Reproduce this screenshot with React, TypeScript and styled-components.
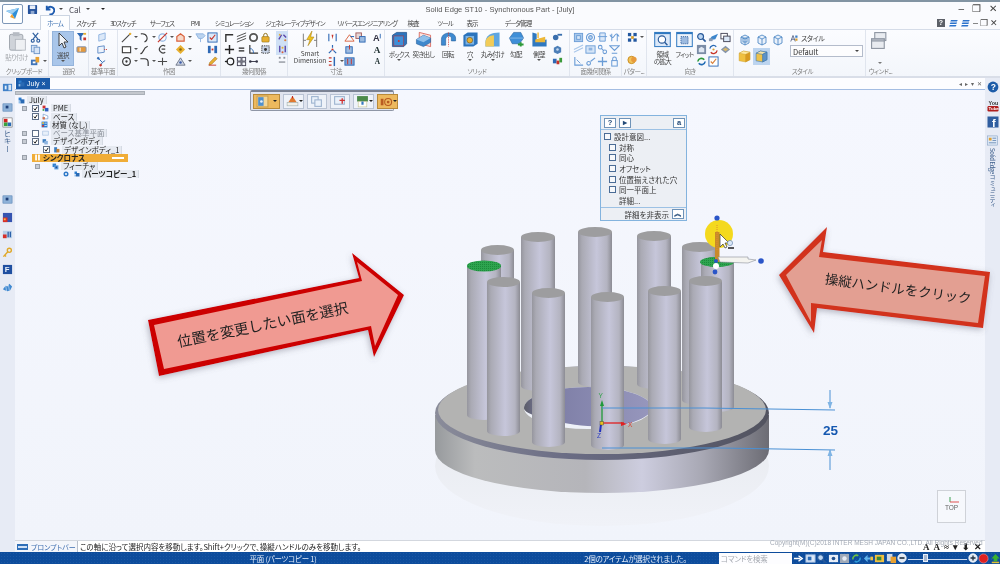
import React from "react";
import styled, { createGlobalStyle } from "styled-components";

const jp = `"Noto Sans CJK JP", "Liberation Sans", sans-serif`;

const GlobalStyle = createGlobalStyle`
  html, body { margin: 0; padding: 0; background: #fff; }
  * { box-sizing: border-box; }
`;

// ---------------------------------------------
// Small ribbon glyphs, all drawn on a 12 unit grid
// ---------------------------------------------
const B = "#2d68b4";
const D = "#3a3f4a";
const L = "#8fb4e0";
const R = "#c8352a";
const Y = "#e8b030";

const glyphs: Record<string, React.ReactNode> = {
  cut: (<g fill="none" stroke="#2f5f9f" strokeWidth="1.3"><path d="M3.5 7.5L9 1M8.5 7.5L3 1" /><circle cx="3" cy="9.5" r="1.6" /><circle cx="9" cy="9.5" r="1.6" /></g>),
  copy: (<g fill="#d6e4f6" stroke="#6f96c8"><rect x="1.5" y="1.5" width="6" height="7" /><rect x="4.5" y="3.5" width="6" height="7" /></g>),
  brush: (<g><rect x="1" y="4" width="7" height="6" fill="#3f74b8" /><rect x="6" y="1" width="4" height="6" fill="#e8a030" /><rect x="3" y="6" width="3" height="2" fill="#fff" /></g>),
  filter: (<g><path d="M1 1h8L6 5v5L4 8V5z" fill={B} /><rect x="8" y="6" width="3" height="3" fill={R} /><rect x="8" y="1" width="3" height="2" fill={Y} /></g>),
  ticket: (<g><rect x="1" y="3" width="10" height="6" rx="1" fill="#e59a3c" stroke="#7f93b5" /><rect x="4" y="4" width="1" height="4" fill="#fff" /></g>),
  planeA: (<path d="M3 3l7-2v7l-7 2z" fill="#dbe8f8" stroke={L} />),
  planeB: (<g><path d="M2 3l7-1v7l-7 1z" fill="#edf3fb" stroke="#5f8bc6" /><path d="M9 6h3" stroke={R} strokeDasharray="1 1" /></g>),
  planeC: (<g fill="none" stroke={B}><path d="M2 2l5 5 3-2M7 7l-2 3" /><circle cx="2.5" cy="2.5" r="1" fill={B} /><circle cx="5" cy="10" r="1" fill={R} stroke={R} /></g>),
  line: (<g><path d="M1 11L10 2" stroke="#4a4a4a" strokeWidth="1.2" /><circle cx="10" cy="2" r="1.3" fill={Y} /></g>),
  arc: (<path d="M2 2c7-1 9 6 4 9" fill="none" stroke="#3a3a3a" strokeWidth="1.2" />),
  trim: (<g fill="none" strokeWidth="1.2"><circle cx="6" cy="6" r="4" stroke={L} /><path d="M1 11L11 1" stroke={R} /></g>),
  poly: (<path d="M2 10V5l4-3 4 3v5z" fill="#f6d8c8" stroke="#d9603c" strokeWidth="1.3" />),
  rect: (<rect x="1.5" y="3" width="9" height="6.5" fill="#fff" stroke="#3a3a3a" strokeWidth="1.2" />),
  curve: (<path d="M1.5 10.5c4 0 2-6 8-8" fill="none" stroke="#3a3a3a" strokeWidth="1.3" />),
  cee: (<path d="M9 2.5a4 4 0 1 0 0 6.5M9 5.5H5" fill="none" stroke="#444" strokeWidth="1.3" />),
  diamond: (<g><path d="M6 1l5 5-5 5-5-5z" fill={Y} /><circle cx="6" cy="6" r="1.4" fill="#8a6a10" /></g>),
  circle: (<g fill="none" stroke="#333" strokeWidth="1.3"><circle cx="6" cy="6" r="4.2" /><circle cx="6" cy="6" r=".6" /></g>),
  fillet: (<path d="M1.5 3H6c3 0 4 2 4 4v4" fill="none" stroke="#333" strokeWidth="1.3" />),
  cross: (<path d="M1 6h10M6 2v8" fill="none" stroke="#4a4a4a" strokeWidth="1.2" />),
  tri: (<g><path d="M6 2l5 8H1z" fill="#cfd6e4" stroke="#6a7488" /><circle cx="6" cy="7" r="1.4" fill="#3d5da8" /></g>),
  wing: (<g><path d="M1 2h8l2 2-3 3H4z" fill="#bcd4ef" stroke={L} /><path d="M6 7v4" stroke={L} /></g>),
  check: (<g><rect x="1" y="1" width="10" height="10" fill="#dbe8f8" stroke={B} /><path d="M3 6l2 2 4-5" fill="none" stroke="#c8352a" strokeWidth="1.2" /></g>),
  split: (<g fill={B}><rect x="1" y="2" width="3" height="8" /><rect x="8" y="2" width="3" height="8" /><rect x="5" y="5" width="2" height="2" fill={R} /></g>),
  pencil: (<g><path d="M2 10l1-3 6-6 2 2-6 6z" fill={Y} stroke="#a06a10" strokeWidth=".6" /><path d="M2 10h8" stroke={R} /></g>),
  corner: (<path d="M2 11V3h8" fill="none" stroke="#333" strokeWidth="1.5" />),
  para: (<path d="M1 8l10-4M1 5l10-4M1 11l10-4" fill="none" stroke="#444" strokeWidth="1" />),
  ring: (<circle cx="6" cy="6" r="4" fill="none" stroke="#555" strokeWidth="2" />),
  lock: (<g><rect x="2" y="5" width="8" height="6" rx="1" fill={Y} stroke="#8a6a10" strokeWidth=".6" /><path d="M4 5V3.5a2 2 0 0 1 4 0V5" fill="none" stroke="#8a6a10" /></g>),
  plus: (<path d="M1 6h10M6 1v10" stroke="#222" strokeWidth="1.6" />),
  equal: (<path d="M3 4.5h6M3 7.5h6" stroke="#222" strokeWidth="1.5" />),
  angle: (<g fill="none"><path d="M2 1v9h9" stroke="#333" strokeWidth="1.3" /><path d="M2 5c3 0 4 2 4 5" stroke={B} /></g>),
  dotSq: (<g><rect x="2" y="2" width="8" height="8" fill="#c9d4e6" stroke="#333" strokeDasharray="1.4 1" /><circle cx="6" cy="6" r="1.6" fill="#333" /></g>),
  tangent: (<g fill="none" stroke="#222" strokeWidth="1.4"><circle cx="7" cy="6" r="3.6" /><path d="M1 6h3" /></g>),
  knot: (<g fill="none" stroke="#445" strokeWidth="1"><rect x="1.5" y="1.5" width="4" height="4" /><rect x="6.5" y="6.5" width="4" height="4" /><rect x="1.5" y="6.5" width="4" height="4" /><rect x="6.5" y="1.5" width="4" height="4" /></g>),
  dots: (<g fill="#334"><circle cx="2.5" cy="6" r="1.4" /><circle cx="9.5" cy="6" r="1.4" /><path d="M3 5.5h6v1H3z" /></g>),
  relA: (<g><path d="M2 8l3-5M7 3l3 3" stroke="#5a45a8" strokeWidth="1.5" /><circle cx="3" cy="3" r="1" fill={Y} /><circle cx="9" cy="9" r="1.2" fill="#d9803a" /></g>),
  relB: (<g><path d="M3 2v7M9 2v7" stroke="#5a45a8" strokeWidth="1.5" /><circle cx="6" cy="4" r="1.1" fill={Y} /><circle cx="6" cy="9" r="1.1" fill="#d9603a" /></g>),
  relC: (<g fill="#8a8f98"><rect x="2" y="2" width="2" height="2" /><rect x="7" y="2" width="2" height="2" /><rect x="2" y="7" width="7" height="1.4" /></g>),
  dimA: (<g><path d="M2 2v8M10 2v8" stroke={B} strokeWidth="1.2" /><path d="M5 3l2 0-1 5z" fill={R} /></g>),
  dimB: (<g><path d="M6 1v3M2 10l3-3M10 10L7 7" stroke={B} strokeWidth="1.3" /><circle cx="6" cy="6" r="1.2" fill={R} /></g>),
  dimC: (<g><path d="M2 2h3M2 6h3M2 10h3" stroke={R} strokeWidth="1.3" /><path d="M8 1v10" stroke={B} strokeWidth="1.6" /></g>),
  dimD: (<g fill="none"><path d="M1 10L6 3l5 7z" stroke="#d9603c" /><path d="M7 5h4" stroke={B} strokeWidth="1.2" /></g>),
  dimE: (<g><rect x="2" y="3" width="7" height="7" fill="#9dbbe0" stroke={B} /><path d="M6 1v5" stroke={R} /></g>),
  dimF: (<g><rect x="1" y="2" width="10" height="8" fill="#7ea5d8" stroke={B} /><path d="M4 3v6M8 3v6" stroke={R} /></g>),
  dimG: (<g><rect x="1" y="1" width="6" height="6" fill="#e6d6d6" stroke="#a05a5a" /><rect x="5" y="5" width="6" height="6" fill="#9dbbe0" stroke={B} /></g>),
  txtA: (<g><text x="1" y="10" fontSize="10" fontWeight="700" fontFamily="Liberation Sans" fill="#334">A</text><path d="M9 2v5" stroke={B} /></g>),
  txtB: (<text x="2" y="10" fontSize="10" fontWeight="700" fontFamily="Liberation Serif" fill="#233">A</text>),
  txtC: (<text x="3" y="9" fontSize="8" fontWeight="700" fontFamily="Liberation Serif" fill="#233">A</text>),
  bolt: (<g><path d="M1 2v10M11 2v10M1 7h2M9 7h2" stroke="#777" strokeWidth=".7" /><path d="M7.5 0L3.5 6.5h2.5L4.5 11 9 4.5H6.5z" fill="#eec21f" stroke="#a87f10" strokeWidth=".4" /></g>),
  box: (<g><path d="M1 3l3-2h7v8l-2 2H1z" fill="#2c74bd" stroke="#164a84" strokeWidth=".5" /><rect x="2" y="3.5" width="7" height="7" fill="#3e8fd8" stroke="#c03030" strokeWidth=".4" /><circle cx="5.5" cy="7" r=".7" fill="#d03030" /></g>),
  extrude: (<g><path d="M3 1l8 2v8l-8-2z" fill="#fbe3de" stroke="#d0453a" strokeWidth=".5" /><path d="M1 6l5-3 5 2v3l-5 3-5-2z" fill="#3f88cc" stroke="#1f5a98" strokeWidth=".4" /><path d="M1 6l5 2 5-3-5-2z" fill="#8fc0ea" /></g>),
  revolve: (<g><path d="M1 10V6c0-6 10-6 10-1v2H8V5c0-2-4-2-4 1v4z" fill="#3e8ad0" stroke="#1f5a98" strokeWidth=".4" /><path d="M6 1v10" stroke="#d03a30" strokeWidth=".5" strokeDasharray="1 .6" /></g>),
  hole: (<g><path d="M1 3l3-2h7v8l-3 2H1z" fill="#2c74bd" /><path d="M2.5 3.5h6v6h-6z" fill="#7db4e4" /><circle cx="5.5" cy="6.5" r="2" fill={Y} stroke="#6a4a10" strokeWidth=".4" /></g>),
  round: (<g><path d="M1 11V8c0-5 4-7 10-7v10z" fill="#5fa6e0" /><path d="M1 8c0-3 3-5 6-5v8H1z" fill="#f2cc58" /></g>),
  draft: (<g><path d="M1 5l3-4h5l2 4-3 4H3z" fill="#3f8fd8" stroke="#1f5a98" strokeWidth=".4" /><path d="M1 5h10" stroke="#9cc6ee" strokeWidth=".5" /><path d="M7 9.5h4M9 8v3" stroke="#2f9a3a" strokeWidth="1.3" /></g>),
  wall: (<g><path d="M1 1l3 1v5l7-1v5H1z" fill="#2f78c0" /><path d="M3 6l7-2v4H3z" fill="#eeb838" /><path d="M5 1v4" stroke="#eeb838" /></g>),
  sm1: (<g fill="#3a6fae"><circle cx="4" cy="6" r="3" /><rect x="6" y="2" width="5" height="2" /></g>),
  sm2: (<g><path d="M2 4l4-2 4 2v5l-4 2-4-2z" fill="#4d7fb8" /><circle cx="6" cy="6" r="1.4" fill="#c5d8ee" /></g>),
  sm3: (<g><rect x="1" y="3" width="4" height="5" fill={B} /><rect x="5" y="5" width="3" height="4" fill="#c8352a" /><rect x="8" y="2" width="3" height="5" fill="#3b9a3a" /></g>),
  face1: (<g><rect x="1.5" y="1.5" width="9" height="9" fill="#a8c8ec" stroke="#6a9cd6" /><rect x="4" y="4" width="4" height="4" fill="#d5e5f7" stroke="#6a9cd6" /></g>),
  face2: (<g fill="none" stroke="#6a9cd6" strokeWidth="1.2"><circle cx="6" cy="6" r="4.4" /><circle cx="6" cy="6" r="2" fill="#bcd6f2" /></g>),
  face3: (<g fill="none" stroke="#6a9cd6"><path d="M3 1h6v9H3z" fill="#dbe8f8" /><path d="M1 5h10" /></g>),
  face4: (<path d="M1 3c2 4 3 4 5 1s3-2 5 1M3 2v8M9 2v8" fill="none" stroke="#6a9cd6" strokeWidth="1.1" />),
  face5: (<path d="M1 9l10-5M1 6l10-5" fill="none" stroke="#a9c7ea" strokeWidth="1.2" />),
  face6: (<g><rect x="1" y="2" width="10" height="8" fill="#d5e5f7" stroke="#6a9cd6" /><rect x="4" y="4" width="4" height="3" fill="#8fb4e0" /></g>),
  face7: (<g fill="none" stroke="#6a9cd6" strokeWidth="1.1"><circle cx="3.5" cy="3.5" r="2" /><circle cx="8.5" cy="8.5" r="2" /><path d="M5 5l2 2" /></g>),
  face8: (<path d="M1 2h10L6 7zM3 10h6" fill="none" stroke="#6a9cd6" strokeWidth="1.1" />),
  face9: (<g fill="none" stroke="#6a9cd6"><path d="M2 1v9h9" strokeWidth="1.2" /><path d="M4 4l4 4" /></g>),
  face10: (<g fill="none" stroke="#6a9cd6" strokeWidth="1.2"><circle cx="4" cy="8" r="2" /><path d="M6 6l5-4" /></g>),
  face11: (<path d="M1 6h10M6 1v10" stroke="#6a9cd6" strokeWidth="1.4" />),
  face12: (<g fill="none" stroke="#6a9cd6" strokeWidth="1.1"><rect x="3" y="5" width="6" height="6" /><path d="M4 5V3a2 2 0 0 1 4 0v2" /></g>),
  stripe: (<path d="M2.5 2.5h8l-1 1.6h-8zM1.8 5.5h8l-1 1.6h-8zM1 8.5h8l-1 1.6H0z" fill="#2a72cc" />),
  grid: (<g fill="#22579f"><rect x="1" y="1" width="3.6" height="3.6" /><rect x="7" y="1" width="3.6" height="3.6" /><rect x="1" y="7" width="3.6" height="3.6" /><rect x="7" y="7" width="3.6" height="3.6" /><rect x="4.5" y="4.5" width="3" height="3" fill="#d9a030" /></g>),
  swirl: (<g><circle cx="5" cy="6.5" r="4" fill="#f0c35a" stroke="#c88a1a" /><circle cx="7.5" cy="6" r="3" fill="#e79a3c" /></g>),
  zoomArea: (<g><rect x=".5" y="1" width="11" height="10" fill="#dbe8f8" stroke="#2f78c0" strokeWidth=".7" /><rect x=".5" y="1" width="11" height="1.2" fill="#2f78c0" /><circle cx="5.6" cy="6" r="2.6" fill="#fff" stroke="#2a5a9a" strokeWidth=".8" /><path d="M7.5 8l2 2" stroke="#2a5a9a" strokeWidth="1" /></g>),
  fit: (<g><rect x=".5" y="1" width="11" height="10" fill="#eef4fb" stroke="#2f78c0" strokeWidth=".7" /><rect x=".5" y="1" width="11" height="1.2" fill="#2f78c0" /><rect x="3.5" y="4" width="5" height="5" fill="#9dbbe0" stroke="#2a5a9a" strokeWidth=".6" strokeDasharray=".8 .6" /></g>),
  mag: (<g fill="none" stroke="#2a5a9a" strokeWidth="1.3"><circle cx="5" cy="5" r="3.2" fill="#bcd6f2" /><path d="M7.5 7.5l3 3" strokeWidth="1.8" /></g>),
  pan: (<g><path d="M1 9l3-4 7-3-3 6z" fill="#3c86cc" /><rect x="1" y="7" width="4" height="3" fill="#8a9ab0" /></g>),
  win2: (<g fill="#fff" stroke="#445"><rect x="1" y="1.5" width="7" height="6" /><rect x="4" y="4.5" width="7" height="6" fill="#dbe8f8" /></g>),
  cam: (<g><rect x="1" y="1" width="10" height="10" fill="#7b8ca6" /><path d="M3 9V5l3-2 3 2v4z" fill="#dfe7f2" /></g>),
  spin: (<g fill="none" strokeWidth="1.3"><path d="M2 5a4 4 0 0 1 7-2" stroke="#2a6ab4" /><path d="M10 7a4 4 0 0 1-7 2" stroke="#c8352a" /><circle cx="6" cy="6" r="1.2" fill="#d9a030" stroke="none" /></g>),
  gem: (<g><path d="M1 6l5-4 5 4-5 4z" fill="#8594a8" /><path d="M3 6l3-2 3 2-3 2z" fill="#d9b86a" /></g>),
  loop: (<g fill="none" strokeWidth="1.8"><path d="M2 6a4 4 0 0 1 7-2" stroke="#2e9a3c" /><path d="M10 6a4 4 0 0 1-7 2" stroke="#1f6ab4" /></g>),
  flag: (<g><rect x="1" y="1" width="10" height="10" fill="#fff" stroke={B} /><path d="M3 6l2 2 4-5" fill="none" stroke="#d9803a" strokeWidth="1.3" /></g>),
  cubeA: (<g fill="#eaf1fa" stroke="#3f7fc0" strokeWidth=".8"><path d="M2 3l4-2 4 2v6l-4 2-4-2z" /><path d="M2 3l4 2 4-2M6 5v6" fill="none" /><rect x="4" y="4" width="4" height="4" fill="none" /></g>),
  cubeB: (<g fill="#eaf1fa" stroke="#3f7fc0" strokeWidth=".8"><path d="M2 3l4-2 4 2v6l-4 2-4-2z" /><path d="M2 3l4 2 4-2M6 5v6" fill="none" /></g>),
  cubeY: (<g stroke="#caa030" strokeWidth=".4"><path d="M1 3l4-2 6 1v7l-4 2-6-1z" fill="#f0c040" /><path d="M7 4l4-2v7l-4 2z" fill="#d99a20" /><path d="M1 3l6 1 4-2-6-1z" fill="#ffe9a0" /></g>),
  cubeS: (<g stroke="#2f6fb0" strokeWidth=".5"><path d="M1 3l4-2 6 1v7l-4 2-6-1z" fill="#edc24a" /><path d="M1 3l6 1 4-2-6-1z" fill="#f6e3a8" /><path d="M7 4l4-2v7l-4 2z" fill="#5d93c8" /></g>),
  layers: (<g fill="#e8ebf0" stroke="#8e96a2" strokeWidth=".7"><rect x="3" y="1" width="7" height="5" /><rect x="1" y="5" width="8" height="6" /><rect x="1" y="5" width="8" height="1.3" fill="#c2c8d2" /></g>),
  paste: (<g><rect x="1.5" y="2" width="8" height="9.5" rx="1" fill="#cfd3d9" stroke="#a2a8b0" strokeWidth=".6" /><rect x="3.5" y=".7" width="4" height="2.4" fill="#b6bbc3" /><rect x="5" y="5" width="6" height="6.5" fill="#eef0f3" stroke="#b0b5bd" strokeWidth=".5" /></g>),
  styleIcon: (<g><path d="M1 10L4 2l3 8M2.5 7h3" stroke="#3a4a70" fill="none" strokeWidth="1" /><rect x="7" y="2" width="3" height="3" fill="#3d7fc4" /><rect x="7" y="6" width="3" height="3" fill="#d9a030" /></g>),
  arrowRight: (<path d="M1 6h7M6 3l4 3-4 3" fill="none" stroke="#fff" strokeWidth="1.6" />),
  stPage: (<g><rect x="1" y="2" width="10" height="8" fill="#dbe8f8" stroke="#9db8dc" /><path d="M3 4h4v4H3z" fill="#2b6cb8" /></g>),
  stDia: (<g><rect x="1" y="2" width="10" height="8" fill="#e8eef7" /><circle cx="6" cy="6" r="2" fill="#20508f" /></g>),
  stGear: (<g><rect x="1" y="1" width="10" height="10" fill="#a0aab8" /><circle cx="6" cy="6" r="2.4" fill="#e6ecf4" /></g>),
  stLoop: (<g fill="none" strokeWidth="1.8"><path d="M2 7a4 4 0 0 1 6-4" stroke="#6dc040" /><path d="M10 5a4 4 0 0 1-6 4" stroke="#2f9ad8" /></g>),
  stMove: (<g fill="#5fb2ea"><path d="M1 6l4-4v3h3v2H5v3z" /><rect x="8" y="4" width="3" height="4" fill="#f0c040" /></g>),
  stGreen: (<g><rect x="1" y="2" width="10" height="8" fill="#f0c040" /><rect x="3" y="4" width="5" height="4" fill="#3a8a3a" /></g>),
  stDoc: (<g><rect x="1" y="1" width="6" height="8" fill="#cfd9e6" /><rect x="5" y="4" width="6" height="7" fill="#e8a030" /></g>),
  zoomOut: (<g><circle cx="6" cy="6" r="5" fill="#dfe7f2" stroke="#fff" /><rect x="3" y="5" width="6" height="2" fill="#234" /></g>),
  zoomIn: (<g><circle cx="6" cy="6" r="5" fill="#dfe7f2" stroke="#fff" /><path d="M3 6h6M6 3v6" stroke="#234" strokeWidth="1.6" /></g>),
  stop: (<g><circle cx="6" cy="6" r="5" fill="#e02020" stroke="#f5a0a0" strokeWidth=".6" /></g>),
  go: (<g><path d="M6 1l4.5 5H8v3H4V6H1.5z" fill="#38b030" /><rect x="2" y="9.5" width="8" height="1.6" fill="#e0c030" /></g>),
  tool1: (<g><rect x="1" y="1" width="10" height="10" fill="#f3d79a" stroke="#caa050" /><rect x="2" y="2" width="5" height="8" fill="#4f90d0" /><circle cx="5" cy="6" r="1.2" fill="#e8f0fa" /></g>),
  tool2: (<g><path d="M6 1l4 6H2z" fill="#e07a30" /><rect x="1" y="7" width="10" height="3" fill="#f2f0e8" stroke="#9aa" strokeWidth=".5" /><path d="M6 1v2" stroke="#c02020" /></g>),
  tool3: (<g fill="#eaf1fa" stroke="#9db3cf"><rect x="1.5" y="1.5" width="6" height="6" /><rect x="4.5" y="4.5" width="6" height="6" /></g>),
  tool4: (<g><rect x="1.5" y="1.5" width="9" height="7" fill="#eaf1fa" stroke="#9db3cf" /><path d="M6 5h5M8.5 3v5" stroke="#d03030" strokeWidth="1.2" /></g>),
  tool5: (<g><rect x="1" y="1" width="10" height="5" fill="#4b8a4a" /><rect x="2" y="6" width="8" height="5" fill="#fdfdf8" stroke="#bb8" strokeWidth=".5" /><rect x="5" y="6" width="2" height="3" fill="#3478c0" /></g>),
  tool6: (<g fill="none" stroke="#b85a20"><rect x="1.2" y="4" width="1.5" height="5" fill="#b85a20" /><circle cx="7.5" cy="6.5" r="3.2" strokeWidth="1" /><circle cx="7.5" cy="6.5" r=".8" fill="#b85a20" /></g>),
  railLib: (<g><rect x="1" y="2" width="10" height="8" fill="#3f80c8" /><rect x="3" y="4" width="2" height="4" fill="#e2eefa" /><rect x="7" y="3" width="3" height="6" fill="#d6e6f7" /></g>),
  railScreen: (<g><rect x="1" y="2" width="10" height="8" fill="#8fb2d8" stroke="#3a6ea8" strokeWidth=".5" /><rect x="4" y="4" width="3" height="3" fill="#1e3f78" /></g>),
  railRed: (<g><rect x="1" y="1" width="10" height="10" fill="#fff" stroke="#444" strokeWidth=".5" /><rect x="2" y="2" width="4" height="4" fill="#d02020" /><rect x="6" y="6" width="4" height="4" fill="#2a6ab4" /><rect x="2" y="6" width="4" height="4" fill="#38a040" /></g>),
  railHeat: (<g><rect x="1" y="1" width="10" height="10" fill="#3553b0" /><rect x="1" y="6" width="5" height="5" fill="#d8302a" /><rect x="2" y="7" width="2" height="2" fill="#f0c040" /></g>),
  railHeat2: (<g><rect x="1" y="2" width="10" height="8" fill="#b8cfe8" /><rect x="1" y="6" width="4" height="4" fill="#d8302a" /><rect x="6" y="3" width="1.4" height="6" fill="#2a5fa8" /><rect x="8.4" y="3" width="1.4" height="6" fill="#2a5fa8" /></g>),
  railKey: (<g fill="none" stroke="#e0a828" strokeWidth="1.5"><circle cx="8" cy="3.6" r="2.2" /><path d="M6.4 5.2L1.5 10.5M3 9l1.4 1.4" /></g>),
  railF: (<g><rect x="1" y="1" width="10" height="10" fill="#1f4fa0" /><text x="3" y="9.2" fontSize="8.5" fontWeight="700" fontFamily="Liberation Sans" fill="#e8f0fa">F</text></g>),
  railWave: (<g fill="#3f88d0"><path d="M1 8l3-4 2 1 2-3 3 3-2 4-3 1-3-1z" /><path d="M4 4l1 6M7 3l1 6" stroke="#cfe2f6" strokeWidth=".7" /></g>),
  help: (<g><circle cx="6" cy="6" r="5.4" fill="#1d5ca8" /><text x="3.7" y="9.2" fontSize="8.5" fontWeight="700" fontFamily="Liberation Sans" fill="#fff">?</text></g>),
  youtube: (<g><text x="1.5" y="5.2" fontSize="5.4" fontWeight="700" fontFamily="Liberation Sans" fill="#333">You</text><rect x=".5" y="6" width="11" height="5.5" rx="1.2" fill="#b01e1e" /><text x="1.6" y="10.3" fontSize="4.4" fontWeight="700" fontFamily="Liberation Sans" fill="#fff">Tube</text></g>),
  facebook: (<g><rect x=".5" y=".5" width="11" height="11" fill="#2f5d9f" /><text x="5" y="11.2" fontSize="11" fontWeight="700" fontFamily="Liberation Sans" fill="#fff">f</text></g>),
  community: (<g><rect x=".5" y="1" width="11" height="10" fill="#dfe9f6" stroke="#7f9cc2" strokeWidth=".6" /><rect x="2" y="3" width="3" height="3" fill="#e0a030" /><path d="M6 3.5h4M6 6h4M2 8.5h8" stroke="#6f8fb8" /></g>),
  treePart: (<g><rect x="1" y="1" width="5" height="5" fill="#2f7fd0" /><rect x="4" y="4" width="7" height="7" fill="#2a6ab4" /><rect x="1" y="7" width="3" height="4" fill="#8fbce8" /></g>),
  treePme: (<g><rect x="1" y="1" width="5" height="5" fill="#d03030" /><rect x="5" y="5" width="6" height="6" fill="#3060c0" /><rect x="1" y="7" width="3" height="3" fill="#3aa050" /></g>),
  treeBase: (<g><path d="M2 10V2l8 3v5z" fill="#fff" stroke="#5f8bc6" /><rect x="1" y="7" width="4" height="4" fill="#d07050" /></g>),
  treeMat: (<g><rect x="1" y="1" width="10" height="10" fill="#2f7fd0" /><rect x="2" y="2" width="3" height="3" fill="#f0c040" /><rect x="2" y="7" width="3" height="3" fill="#d03030" /><rect x="6" y="3" width="4" height="1.2" fill="#fff" /><rect x="6" y="7" width="4" height="1.2" fill="#fff" /></g>),
  treePlane: (<g><path d="M1 2h10v7H1z" fill="#e8f0fa" stroke="#9db8dc" /></g>),
  treeBody: (<g><rect x="1" y="2" width="6" height="6" fill="#3f7fc0" /><rect x="4" y="5" width="6" height="6" fill="#8fb4e0" /></g>),
  treeBody2: (<g><rect x="2" y="2" width="5" height="9" fill="#3f7fc0" /><rect x="6" y="5" width="5" height="6" fill="#c88030" /></g>),
  treeSync: (<g fill="#fff"><rect x="2" y="1" width="3" height="10" /><rect x="7" y="1" width="3" height="10" /></g>),
  treeFeature: (<g><rect x="1" y="1" width="6" height="6" fill="#2f7fd0" /><rect x="4" y="4" width="7" height="7" fill="#5f9de0" /><rect x="6" y="6" width="3" height="3" fill="#1f4f90" /></g>),
  treeEye: (<g><circle cx="6" cy="6" r="5" fill="#2f78c8" /><circle cx="6" cy="6" r="2" fill="#fff" /></g>),
};

const GlyphSvg = styled.svg<{ $size: number }>`
  width: ${(p) => p.$size}px;
  height: ${(p) => p.$size}px;
  flex: none;
  display: block;
`;

const Glyph = ({ name, size = 11 }: { name: string; size?: number }) => (
  <GlyphSvg viewBox="0 0 12 12" $size={size}>
    {glyphs[name]}
  </GlyphSvg>
);

// ---------------------------------------------
// Window chrome
// ---------------------------------------------
const Page = styled.div`
  position: relative;
  width: 1000px;
  height: 564px;
  overflow: hidden;
  display: flex;
  flex-direction: column;
  background: #f7f9fd;
  font-family: ${jp};
  font-feature-settings: "palt" 1;
  filter: blur(0.3px);
`;

const TopEdge = styled.div`
  height: 2px;
  background: #8294a3;
`;

const TitleBar = styled.div`
  height: 14px;
  display: grid;
  grid-template-columns: 1fr auto 1fr;
  align-items: center;
  background: #fafbfe;
`;

const QuickBar = styled.div`
  display: flex;
  align-items: center;
  padding-left: 27px;
  gap: 3px;
  color: #4a4a55;
  font-size: 8px;
`;

const QuickGap = styled.span`
  margin-left: 3px;
  display: flex;
`;

const Caret = styled.span<{ $color?: string; $left?: number }>`
  display: block;
  width: 0;
  height: 0;
  flex: none;
  margin-left: ${(p) => p.$left ?? 0}px;
  border-left: 2px solid transparent;
  border-right: 2px solid transparent;
  border-top: 2.5px solid ${(p) => p.$color || "#444"};
`;

const TitleText = styled.div`
  font-size: 7.5px;
  color: #555;
  font-family: "Liberation Sans", sans-serif;
  white-space: nowrap;
  letter-spacing: 0.05px;
`;

const WindowButtons = styled.div`
  display: flex;
  justify-content: flex-end;
  align-items: center;
  gap: 8px;
  padding-right: 3px;
  color: #444;
  font-family: "Liberation Sans", sans-serif;
  font-size: 10px;
  line-height: 10px;
`;

const TabRow = styled.div`
  position: relative;
  height: 14px;
  display: flex;
  padding-left: 40px;
  background: #fafbfe;
  border-bottom: 1px solid #d5dce8;
`;

const Tab = styled.div<{ $w: number; $active?: boolean }>`
  width: ${(p) => p.$w}px;
  height: ${(p) => (p.$active ? 15 : 13)}px;
  margin-top: ${(p) => (p.$active ? -1 : 0)}px;
  display: flex;
  justify-content: center;
  align-items: center;
  white-space: nowrap;
  font-size: 6.5px;
  letter-spacing: -0.9px;
  color: ${(p) => (p.$active ? "#3a6fb0" : "#444")};
  background: ${(p) => (p.$active ? "#fdfeff" : "transparent")};
  border: ${(p) => (p.$active ? "1px solid #ccd5e2" : "none")};
  border-bottom: none;
  z-index: 1;
`;

const TabTools = styled.div`
  position: absolute;
  right: 2px;
  top: 2px;
  display: flex;
  align-items: center;
  gap: 2px;
  color: #444;
  font-size: 9px;
  line-height: 9px;
  font-family: "Liberation Sans", sans-serif;
`;

const HelpBox = styled.span`
  width: 8px;
  height: 8px;
  background: #5c6068;
  color: #fff;
  font-size: 7px;
  line-height: 8px;
  text-align: center;
  font-weight: 700;
  margin-right: 2px;
`;

const AppButton = styled.div`
  position: absolute;
  left: 2px;
  top: 4px;
  width: 21px;
  height: 20px;
  background: #fdfeff;
  border: 1px solid #7d97b8;
  border-radius: 2px;
  display: flex;
  align-items: center;
  justify-content: center;
  z-index: 2;
`;

// ---------------------------------------------
// Ribbon
// ---------------------------------------------
const Ribbon = styled.div`
  height: 48px;
  display: flex;
  background: linear-gradient(#fbfcff, #f3f6fb);
  border-bottom: 2px solid #d9dee8;
`;

const Group = styled.div<{ $w: number; $plain?: boolean }>`
  width: ${(p) => p.$w}px;
  flex: none;
  display: flex;
  flex-direction: column;
  border-right: ${(p) => (p.$plain ? "none" : "1px solid #e0e5ee")};
`;

const GroupBody = styled.div<{ $pad?: number }>`
  height: 37px;
  display: flex;
  padding-left: ${(p) => p.$pad ?? 0}px;
  padding-top: 1px;
`;

const GroupLabel = styled.div<{ $pullLeft?: number }>`
  height: 9px;
  font-size: 6.5px;
  line-height: 9px;
  letter-spacing: -0.5px;
  color: #808080;
  text-align: center;
  white-space: nowrap;
  padding-right: ${(p) => p.$pullLeft ?? 0}px;
`;

const Cluster = styled.div<{ $cols: string; $left?: number; $row?: number }>`
  display: grid;
  grid-template-columns: ${(p) => p.$cols};
  grid-auto-rows: ${(p) => p.$row ?? 12}px;
  align-items: center;
  margin-left: ${(p) => p.$left ?? 0}px;
`;

const Cell = styled.div<{ $h?: number; $top?: number }>`
  display: flex;
  align-items: center;
  gap: 2px;
  height: ${(p) => (p.$h ? `${p.$h}px` : "auto")};
  margin-top: ${(p) => p.$top ?? 0}px;
`;

const BigButton = styled.div<{ $w: number; $on?: boolean; $muted?: boolean; $latin?: boolean }>`
  width: ${(p) => p.$w}px;
  height: 35px;
  flex: none;
  display: flex;
  flex-direction: column;
  align-items: center;
  gap: 1px;
  font-size: 6.5px;
  line-height: 7px;
  letter-spacing: ${(p) => (p.$latin ? 0 : -0.6)}px;
  text-align: center;
  white-space: nowrap;
  color: ${(p) => (p.$muted ? "#a5a8ad" : "#444")};
  background: ${(p) => (p.$on ? "#a9c6ea" : "transparent")};
  border: ${(p) => (p.$on ? "1px solid #94b4dc" : "none")};
`;

const BigCaption = styled.div`
  margin-top: 2px;
`;

const BlueStack = styled.div`
  margin-left: 4px;
  display: flex;
  flex-direction: column;
  align-items: center;
`;

const BlueColumn = styled.div`
  width: 12px;
  height: 24px;
  background: #cfe0f5;
  display: flex;
  flex-direction: column;
  align-items: center;
  justify-content: space-around;
`;

const ViewCell = styled.div<{ $on?: boolean }>`
  height: 17px;
  display: flex;
  align-items: center;
  justify-content: center;
  background: ${(p) => (p.$on ? "#bcd4ef" : "transparent")};
`;

const StyleHead = styled.div`
  display: flex;
  align-items: center;
  gap: 2px;
  height: 10px;
  font-size: 7px;
  letter-spacing: -0.4px;
  color: #444;
`;

const StyleSelect = styled.div`
  width: 73px;
  height: 12px;
  margin-top: 2px;
  padding: 0 3px 0 2px;
  display: flex;
  align-items: center;
  justify-content: space-between;
  background: #fdfdfe;
  border: 1px solid #b4bccb;
  font-size: 7.5px;
  color: #333;
`;

const StyleColumn = styled.div`
  display: flex;
  flex-direction: column;
  padding: 2px 0 0 2px;
`;

const Tiny = styled.div`
  margin-top: auto;
  margin-bottom: 2px;
`;

// ---------------------------------------------
// Work area
// ---------------------------------------------
const Work = styled.div`
  flex: 1;
  display: flex;
  min-height: 0;
`;

const Rail = styled.div<{ $w: number }>`
  width: ${(p) => p.$w}px;
  flex: none;
  display: flex;
  flex-direction: column;
  align-items: center;
  background: #e7ebf5;
`;

const RailSlot = styled.div<{ $top: number }>`
  margin-top: ${(p) => p.$top}px;
`;

const VerticalText = styled.div<{ $top: number; $size?: number; $track?: number }>`
  margin-top: ${(p) => p.$top}px;
  writing-mode: vertical-rl;
  font-size: ${(p) => p.$size ?? 7.5}px;
  letter-spacing: ${(p) => p.$track ?? 0}px;
  line-height: 9px;
  color: #3d5f8c;
  white-space: nowrap;
`;

const Center = styled.div`
  flex: 1;
  min-width: 0;
  display: flex;
  flex-direction: column;
`;

const DocBar = styled.div`
  height: 12px;
  display: flex;
  align-items: flex-end;
  justify-content: space-between;
  padding-left: 1px;
  background: #fdfdff;
  border-bottom: 1px solid #a4bde2;
`;

const DocTab = styled.div`
  width: 34px;
  height: 11px;
  display: flex;
  align-items: center;
  gap: 2px;
  padding-left: 2px;
  background: #1a5aa8;
  color: #fff;
  font-family: "Liberation Sans", sans-serif;
  font-size: 7px;
`;

const DocControls = styled.div`
  display: flex;
  gap: 3px;
  padding: 0 3px 2px 0;
  color: #666;
  font-size: 6px;
  line-height: 7px;
  font-family: "DejaVu Sans", sans-serif;
`;

const Viewport = styled.div`
  position: relative;
  flex: 1;
  background: linear-gradient(#f5f7fe, #f1f4fb);
  border-bottom: 1px solid #d3d7de;
`;

const TreeScroll = styled.div`
  position: absolute;
  left: 0;
  top: 1px;
  width: 130px;
  height: 4px;
  background: #c3c7cd;
  border: 1px solid #aab0b8;
`;

const Scene = styled.svg`
  position: absolute;
  left: 0;
  top: 0;
  overflow: visible;
`;

const Tree = styled.div`
  position: absolute;
  left: 0;
  top: 6px;
  display: flex;
  flex-direction: column;
  font-size: 7.5px;
  line-height: 8px;
  color: #222;
`;

const TreeRow = styled.div<{ $indent: number }>`
  height: 8.25px;
  display: flex;
  align-items: center;
  gap: 2px;
  padding-left: ${(p) => p.$indent}px;
  white-space: nowrap;
`;

const Expander = styled.span`
  width: 5px;
  height: 5px;
  flex: none;
  background: #c6cbd3;
  border: 1px solid #9aa0aa;
  margin-right: 3px;
`;

const Check = styled.span`
  width: 7px;
  height: 7px;
  flex: none;
  display: flex;
  align-items: center;
  justify-content: center;
  background: #fff;
  border: 1px solid #5f6f88;
  margin-right: 1px;
`;

const TreeLabel = styled.span<{ $tone?: string }>`
  height: 8px;
  padding: 0 2px;
  background: #e6eaf1;
  border: 1px solid #d5dae3;
  border-width: 0 1px 0 0;
  color: ${(p) => (p.$tone === "muted" ? "#8a8f98" : "#222")};
  font-weight: ${(p) => (p.$tone === "strong" ? 700 : 400)};
`;

const TreeSpace = styled.span<{ $w: number }>`
  width: ${(p) => p.$w}px;
  flex: none;
`;

const SyncBar = styled.div`
  width: 96px;
  height: 8px;
  display: flex;
  align-items: center;
  gap: 2px;
  padding: 0 4px 0 2px;
  background: #f0ad38;
  font-weight: 700;
  color: #222;
`;

const SyncTail = styled.span`
  margin-left: auto;
  width: 12px;
  height: 2px;
  background: #fff;
  border-right: 3px solid #fff;
`;

const ToolStrip = styled.div`
  position: absolute;
  left: 235px;
  top: 0;
  width: 144px;
  height: 21px;
  display: flex;
  align-items: center;
  gap: 3px;
  padding: 0 2px;
  background: #dfe3ee;
  border: 1px solid #8f96a6;
  border-top: 2px solid #7a8294;
  border-radius: 2px;
`;

const ToolButton = styled.div<{ $w: number; $tone?: string }>`
  width: ${(p) => p.$w}px;
  height: 15px;
  flex: none;
  display: flex;
  align-items: center;
  justify-content: space-between;
  padding: 0 2px;
  background: ${(p) => (p.$tone === "orange" ? "#edb95e" : "#eef2f9")};
  border: 1px solid ${(p) => (p.$tone === "orange" ? "#b88a3a" : "#b9c3d4")};
`;

const CommandPanel = styled.div`
  position: absolute;
  left: 585px;
  top: 25px;
  width: 87px;
  height: 106px;
  display: flex;
  flex-direction: column;
  background: #eceff4;
  border: 1px solid #83b3de;
  font-size: 7.5px;
  color: #333;
`;

const PanelHead = styled.div`
  height: 14px;
  display: flex;
  align-items: center;
  gap: 3px;
  padding: 0 1px 0 3px;
  border-bottom: 1px solid #9cc1e4;
`;

const PanelKey = styled.div<{ $end?: boolean }>`
  width: 12px;
  height: 10px;
  margin-left: ${(p) => (p.$end ? "auto" : 0)};
  display: flex;
  align-items: center;
  justify-content: center;
  background: #fff;
  border: 1px solid #6f93b8;
  font-family: "Liberation Sans", sans-serif;
  font-weight: 700;
  font-size: 7.5px;
  color: #234a78;
`;

const PanelList = styled.div`
  flex: 1;
  padding-top: 1px;
`;

const PanelRow = styled.div<{ $indent: number }>`
  height: 10.7px;
  display: flex;
  align-items: center;
  gap: 3px;
  padding-left: ${(p) => p.$indent}px;
  white-space: nowrap;
`;

const PanelBox = styled.span`
  width: 7px;
  height: 7px;
  flex: none;
  background: #f6f8fb;
  border: 1px solid #4a6c96;
`;

const PanelFoot = styled.div`
  height: 13px;
  display: flex;
  align-items: center;
  justify-content: flex-end;
  gap: 3px;
  padding-right: 2px;
  border-top: 1px solid #9cc1e4;
`;

const Cube = styled.div`
  position: absolute;
  left: 922px;
  top: 400px;
  width: 29px;
  height: 33px;
  display: flex;
  flex-direction: column;
  align-items: center;
  padding-top: 6px;
  border: 1px solid #cfd2d8;
  background: rgba(255, 255, 255, 0.35);
  font-family: "Liberation Sans", sans-serif;
  font-size: 6.5px;
  color: #666;
`;

const PromptBar = styled.div`
  position: relative;
  height: 11px;
  display: flex;
  align-items: stretch;
  background: #f4f6fb;
`;

const PromptTitle = styled.div`
  width: 62px;
  display: flex;
  align-items: center;
  gap: 3px;
  padding-left: 2px;
  font-size: 7px;
  color: #3f6fb0;
  white-space: nowrap;
`;

const PromptField = styled.div`
  flex: 1;
  display: flex;
  align-items: center;
  padding-left: 2px;
  background: #fff;
  border-left: 1px solid #b9c0cc;
  font-size: 7.5px;
  color: #222;
  white-space: nowrap;
`;

const PromptTools = styled.div`
  display: flex;
  align-items: center;
  gap: 4px;
  margin-left: auto;
  padding-right: 3px;
  font-family: "Liberation Serif", serif;
  font-weight: 700;
  font-size: 9px;
  color: #222;
`;

const Copyright = styled.div`
  position: absolute;
  left: 755px;
  top: -2px;
  font-family: "Liberation Sans", sans-serif;
  font-size: 6.5px;
  line-height: 8px;
  color: #a3aab5;
  white-space: nowrap;
`;

const StatusBar = styled.div`
  height: 12px;
  display: flex;
  align-items: center;
  background: #0d4c9c;
  background-image: radial-gradient(rgba(255, 255, 255, 0.06) 0.5px, transparent 0.6px);
  background-size: 3px 3px;
  color: #e6eefa;
  font-size: 7.5px;
  letter-spacing: -0.25px;
`;

const StatusText = styled.div<{ $w: number }>`
  width: ${(p) => p.$w}px;
  flex: none;
  text-align: center;
  white-space: nowrap;
`;

const SearchBox = styled.div`
  width: 73px;
  height: 11px;
  margin: 0 1px 0 14px;
  padding-left: 2px;
  display: flex;
  align-items: center;
  background: #fdfdff;
  color: #a5a9b0;
  font-size: 7.5px;
  flex: none;
`;

const StatusIcons = styled.div`
  display: flex;
  align-items: center;
  gap: 0.6px;
`;

const ZoomSlider = styled.div`
  position: relative;
  width: 59px;
  height: 12px;
  flex: none;
  &::before {
    content: "";
    position: absolute;
    left: 0;
    right: 0;
    top: 7px;
    height: 1px;
    background: #cfdcf0;
  }
`;

const ZoomThumb = styled.span`
  position: absolute;
  left: 15px;
  top: 2px;
  width: 5px;
  height: 8px;
  background: #a8b8d0;
  border: 1px solid #e6eefa;
`;

// ---------------------------------------------
// 3D model and callouts
// ---------------------------------------------
const pins = [
  { x: 578, w: 34, y: 232, b: 382 },
  { x: 637, w: 34, y: 236, b: 384 },
  { x: 521, w: 34, y: 237, b: 386 },
  { x: 481, w: 33, y: 250, b: 400 },
  { x: 682, w: 35, y: 247, b: 400 },
  { x: 467, w: 34, y: 266, b: 415, green: true },
  { x: 701, w: 33, y: 262, b: 407, green: true },
  { x: 487, w: 33, y: 282, b: 431 },
  { x: 532, w: 33, y: 293, b: 442 },
  { x: 591, w: 33, y: 297, b: 445 },
  { x: 648, w: 33, y: 291, b: 439 },
  { x: 689, w: 33, y: 281, b: 427 },
];

const Pin = ({ x, w, y, b, green }: { x: number; w: number; y: number; b: number; green?: boolean }) => {
  const rx = w / 2;
  const cx = x + rx;
  return (
    <g>
      <path d={`M${x} ${y}V${b}a${rx} 5 0 0 0 ${w} 0V${y}z`} fill="url(#pinBody)" />
      <ellipse cx={cx} cy={y} rx={rx} ry={5} fill={green ? "#2f9e4f" : "#9d9d9f"} />
    </g>
  );
};

const Model = () => (
  <g>
    <ellipse cx="602" cy="466" rx="167" ry="60" fill="url(#floorShade)" />
    <path d="M435 415v35a167 43 0 0 0 334 0v-35z" fill="url(#discSide)" />
    <ellipse cx="602" cy="413" rx="167" ry="47" fill="url(#discRim)" />
    <ellipse cx="602" cy="410" rx="164" ry="44" fill="#b3b3b2" />
    <ellipse cx="588" cy="408" rx="64" ry="21" fill="#eef1f8" />
    <path d="M524 408a64 21 0 0 1 128 0c0 8-18 15-30 17-22 3-50 1-70-5-16-4-28-7-28-12z" fill="url(#holeWall)" />
    {pins.map((p) => (
      <Pin key={p.x} {...p} />
    ))}

    <g strokeWidth="1.3" fill="none">
      <path d="M602 423v-20" stroke="#1f9a3a" />
      <path d="M602 423h22" stroke="#e02020" />
      <path d="M601 424l-1 8" stroke="#2030c0" strokeWidth="2" />
    </g>
    <path d="M602 400l-2 6h4z" fill="#1f9a3a" />
    <path d="M627 424l-6-2v4z" fill="#e02020" />
    <rect x="600" y="421.5" width="3.5" height="3.5" fill="#e8c020" stroke="#333" strokeWidth=".4" />
    <g fontFamily="Liberation Sans" fontSize="6.5">
      <text x="598.5" y="398" fill="#2fa04a">Y</text>
      <text x="628" y="427" fill="#d84030">X</text>
      <text x="597" y="438" fill="#3040c0">Z</text>
    </g>

    <g stroke="#4a90d4" strokeWidth="1" fill="none">
      <path d="M602 408H704L835 410" />
      <path d="M602 448H720L835 450" />
      <path d="M830 390v18M830 450v20" />
    </g>
    <path d="M830 409l-2.5-7h5zM830 449l-2.5 7h5z" fill="#7fb4e4" />
    <text x="823" y="435" fontFamily="Liberation Sans" fontWeight="700" fontSize="13.5" fill="#1558b0">25</text>

    <ellipse cx="484" cy="266" rx="17" ry="5.5" fill="url(#hatch)" />
    <ellipse cx="716" cy="262" rx="16" ry="5" fill="url(#hatch)" />

    <circle cx="719" cy="234" r="14" fill="#f4d91e" />
    <rect x="715" y="232" width="4.5" height="30" fill="#c98a2a" />
    <path d="M717 225v25" stroke="#e0902a" strokeDasharray="1 1" />
    <path d="M718 257h30v2l8 1-8 3-28-1z" fill="#f4f4f0" stroke="#8a8f98" strokeWidth=".6" />
    <g fill="#2a55c8">
      <circle cx="717" cy="218" r="2.6" />
      <circle cx="761" cy="261" r="2.8" />
      <circle cx="716" cy="261" r="2" />
      <circle cx="715" cy="272" r="2.4" />
    </g>
    <circle cx="716" cy="266" r="3" fill="#fff" />
    <path d="M720 234v13l3-3 2 4 2-1-2-4h4z" fill="#fff" stroke="#333" strokeWidth=".7" />
    <circle cx="730" cy="243" r="2.6" fill="#dbe8f8" stroke="#6b8ab0" strokeWidth=".7" />
    <path d="M728 248h6" stroke="#111" strokeWidth="1.4" />
  </g>
);

const CalloutText = styled.text`
  font-family: "Noto Sans CJK JP", sans-serif;
  font-feature-settings: normal;
  fill: #222;
  text-anchor: middle;
  dominant-baseline: middle;
`;

const Callouts = () => (
  <g>
    <g filter="url(#soft)">
      <polygon points="148,320 359,278 352,253 404,295 374,357 368,330 159,376" fill="#cc0000" />
    </g>
    <polygon points="154,325 362,281 357,262 398,295 375,346 371,326 164,369" fill="#f09a92" />
    <CalloutText x="263" y="326" fontSize="14.5" transform="rotate(-11.5 263 326)">
      位置を変更したい面を選択
    </CalloutText>

    <g filter="url(#soft)">
      <polygon points="779,275 827,227 823,252 990,272 983,328 817,308 814,333" fill="#d2301c" />
    </g>
    <polygon points="786,275 822,240 819,257 985,276 978,323 811,303 811,322" fill="#e39f92" />
    <CalloutText x="898" y="290" fontSize="13.4" transform="rotate(7.8 898 290)">
      操縦ハンドルをクリック
    </CalloutText>
  </g>
);

const SceneDefs = () => (
  <defs>
    <linearGradient id="pinBody">
      <stop offset="0" stopColor="#96969e" />
      <stop offset="0.12" stopColor="#aaaab4" />
      <stop offset="0.55" stopColor="#c6c6da" />
      <stop offset="0.85" stopColor="#b4b4c1" />
      <stop offset="1" stopColor="#8c8c94" />
    </linearGradient>
    <linearGradient id="discSide">
      <stop offset="0" stopColor="#979a9d" />
      <stop offset="0.12" stopColor="#bbbcbd" />
      <stop offset="0.45" stopColor="#b5b5ba" />
      <stop offset="0.62" stopColor="#cdcddf" />
      <stop offset="0.8" stopColor="#a8a8b4" />
      <stop offset="1" stopColor="#6c6c74" />
    </linearGradient>
    <linearGradient id="discRim">
      <stop offset="0" stopColor="#8a8c9a" />
      <stop offset="0.4" stopColor="#6a6c84" />
      <stop offset="1" stopColor="#52535f" />
    </linearGradient>
    <linearGradient id="holeWall">
      <stop offset="0" stopColor="#5c5d68" />
      <stop offset="0.15" stopColor="#7b7ca4" />
      <stop offset="1" stopColor="#9797bd" />
    </linearGradient>
    <linearGradient id="floorShade" x1="0" y1="0" x2="0" y2="1">
      <stop offset="0" stopColor="#e6e9ee" />
      <stop offset="1" stopColor="#f0f2f8" />
    </linearGradient>
    <pattern id="hatch" width="2" height="2" patternUnits="userSpaceOnUse">
      <rect width="2" height="2" fill="#2ea44f" />
      <rect width="1" height="1" fill="#1c8a3b" />
    </pattern>
    <filter id="soft" x="-10%" y="-10%" width="120%" height="125%">
      <feDropShadow dx="-1" dy="2" stdDeviation="3" floodColor="#667" floodOpacity="0.45" />
    </filter>
  </defs>
);

// ---------------------------------------------
// Data
// ---------------------------------------------
const tabs = [
  { label: "ホーム", w: 30, active: true },
  { label: "スケッチ", w: 32 },
  { label: "3Dスケッチ", w: 42 },
  { label: "サーフェス", w: 36 },
  { label: "PMI", w: 30 },
  { label: "シミュレーション", w: 48 },
  { label: "ジェネレーティブデザイン", w: 74 },
  { label: "リバースエンジニアリング", w: 70 },
  { label: "検査", w: 22 },
  { label: "ツール", w: 42 },
  { label: "表示", w: 12 },
  { label: "データ管理", w: 80 },
];

const Drop = () => <Caret $color="#555" />;

const IconGrid = ({ cols, left, items }: { cols: string; left?: number; items: string[] }) => (
  <Cluster $cols={cols} $left={left}>
    {items.map((it, i) => {
      const [name, drop] = it.split(":");
      return (
        <Cell key={i}>
          {name && <Glyph name={name} />}
          {drop && <Drop />}
        </Cell>
      );
    })}
  </Cluster>
);

const Big = ({ w, icon, text, on, muted, drop, latin, size = 17 }: any) => (
  <BigButton $w={w} $on={on} $muted={muted} $latin={latin}>
    <Glyph name={icon} size={size} />
    <BigCaption>{text}</BigCaption>
    {drop && <Caret $color="#555" />}
  </BigButton>
);

const treeRows = [
  { indent: 3, icon: "treePart", label: "July" },
  { indent: 7, exp: true, check: true, icon: "treePme", label: "PME" },
  { indent: 17, check: true, icon: "treeBase", label: "ベース" },
  { indent: 26, icon: "treeMat", label: "材質 (なし)" },
  { indent: 7, exp: true, check: false, icon: "treePlane", label: "ベース基準平面", tone: "muted" },
  { indent: 7, exp: true, check: true, icon: "treeBody", label: "デザインボディ" },
  { indent: 28, check: true, icon: "treeBody2", label: "デザインボディ_1" },
];

const panelRows = [
  { indent: 3, box: true, label: "設計意図..." },
  { indent: 8, box: true, label: "対称" },
  { indent: 8, box: true, label: "同心" },
  { indent: 8, box: true, label: "オフセット" },
  { indent: 8, box: true, label: "位置揃えされた穴" },
  { indent: 8, box: true, label: "同一平面上" },
  { indent: 18, label: "詳細..." },
];

const leftRail = [
  { top: 9, icon: "railScreen" },
  { top: 4, icon: "railRed" },
];

const lowerRail = [
  { top: 0, icon: "railScreen" },
  { top: 7, icon: "railHeat" },
  { top: 6, icon: "railHeat2" },
  { top: 7, icon: "railKey" },
  { top: 6, icon: "railF" },
  { top: 7, icon: "railWave" },
];

const statusIcons = ["arrowRight", "stPage", "mag", "stDia", "stGear", "stLoop", "stMove", "stGreen", "stDoc"];

export default function App() {
  return (
    <Page>
      <GlobalStyle />
      <AppButton>
        <svg width="15" height="14" viewBox="0 0 15 14">
          <path d="M1 4l13-3-4 11-3-5z" fill="#2f8fd8" />
          <path d="M1 4l6 3 7-6z" fill="#9fd0f4" />
          <path d="M7 7l3 5-5-2z" fill="#f0a030" />
        </svg>
      </AppButton>
      <TopEdge />
      <TitleBar>
        <QuickBar>
          <svg width="11" height="11" viewBox="0 0 12 12">
            <rect x="1" y="1" width="10" height="10" rx="1" fill="#25529c" />
            <rect x="3" y="1.5" width="6" height="4" fill="#e8eef8" />
            <rect x="4" y="7.5" width="4" height="3.5" fill="#8fa8d0" />
          </svg>
          <QuickGap>
            <svg width="11" height="11" viewBox="0 0 12 12">
              <path d="M3 2v4h4M3.5 5.5A4 4 0 1 1 6 11" fill="none" stroke="#1f5cb0" strokeWidth="2" />
            </svg>
          </QuickGap>
          <Caret $left={1} />
          <QuickGap>Cal</QuickGap>
          <Caret $left={2} />
          <Caret $left={8} $color="#222" />
        </QuickBar>
        <TitleText>Solid Edge ST10 - Synchronous Part - [July]</TitleText>
        <WindowButtons>
          <span>–</span>
          <span>❐</span>
          <span>✕</span>
        </WindowButtons>
      </TitleBar>

      <TabRow>
        {tabs.map((t) => (
          <Tab key={t.label} $w={t.w} $active={t.active}>
            {t.label}
          </Tab>
        ))}
        <TabTools>
          <HelpBox>?</HelpBox>
          <Glyph name="stripe" size={10} />
          <Glyph name="stripe" size={10} />
          <span>–</span>
          <span>❐</span>
          <span>✕</span>
        </TabTools>
      </TabRow>

      <Ribbon>
        <Group $w={49}>
          <GroupBody $pad={6}>
            <Big w={21} icon="paste" text="貼り付け" muted size={20} />
            <IconGrid cols="14px" left={3} items={["cut", "copy", "brush:d"]} />
          </GroupBody>
          <GroupLabel>クリップボード</GroupLabel>
        </Group>
        <Group $w={40}>
          <GroupBody $pad={3}>
            <BigButton $w={22} $on>
              <svg width="14" height="17" viewBox="0 0 14 17">
                <path d="M3 1v13l3-3 2 5 2-1-2-5h4z" fill="#eef2f7" stroke="#333" strokeWidth=".9" />
              </svg>
              <BigCaption>選択</BigCaption>
              <Caret $color="#555" />
            </BigButton>
            <IconGrid cols="12px" left={2} items={["filter", "ticket"]} />
          </GroupBody>
          <GroupLabel>選択</GroupLabel>
        </Group>
        <Group $w={29}>
          <GroupBody $pad={7}>
            <IconGrid cols="12px" items={["planeA", "planeB", "planeC"]} />
          </GroupBody>
          <GroupLabel>基準平面</GroupLabel>
        </Group>
        <Group $w={103}>
          <GroupBody $pad={3}>
            <IconGrid
              cols="17.5px 18px 18px 20px 12px 12px"
              items={["line:d", "arc:d", "trim:d", "poly:d", "wing", "check", "rect:d", "curve", "cee", "diamond:d", "", "split", "circle:d", "fillet:d", "cross", "tri:d", "", "pencil"]}
            />
          </GroupBody>
          <GroupLabel>作図</GroupLabel>
        </Group>
        <Group $w={67}>
          <GroupBody $pad={3}>
            <IconGrid
              cols="12px 12px 12px 12px"
              items={["corner", "para", "ring", "lock", "plus", "equal", "angle", "dotSq", "tangent", "knot", "dots", ""]}
            />
            <BlueStack>
              <BlueColumn>
                <Glyph name="relA" />
                <Glyph name="relB" />
              </BlueColumn>
              <Glyph name="relC" />
            </BlueStack>
          </GroupBody>
          <GroupLabel>幾何関係</GroupLabel>
        </Group>
        <Group $w={97}>
          <GroupBody $pad={4}>
            <Big w={36} icon="bolt" latin text={<>Smart<br />Dimension</>} size={16} />
            <IconGrid
              cols="17px 11px 12px"
              left={-1}
              items={["dimA", "dimD", "dimG", "dimB", "dimE", "", "dimC:d", "dimF", ""]}
            />
            <IconGrid cols="12px" left={5} items={["txtA", "txtB", "txtC"]} />
          </GroupBody>
          <GroupLabel>寸法</GroupLabel>
        </Group>
        <Group $w={185}>
          <GroupBody $pad={3}>
            <Big w={22} icon="box" text="ボックス" drop />
            <Big w={27} icon="extrude" text="突き出し" />
            <Big w={22} icon="revolve" text="回転" />
            <Big w={22} icon="hole" text="穴" drop />
            <Big w={23} icon="round" text="丸み付け" drop />
            <Big w={24} icon="draft" text="勾配" />
            <Big w={22} icon="wall" text="側壁" drop />
            <IconGrid cols="12px" left={2} items={["sm1", "sm2", "sm3"]} />
          </GroupBody>
          <GroupLabel>ソリッド</GroupLabel>
        </Group>
        <Group $w={52}>
          <GroupBody $pad={3}>
            <IconGrid
              cols="12px 12px 12px 12px"
              items={["face1", "face2", "face3", "face4", "face5", "face6", "face7", "face8", "face9", "face10", "face11", "face12"]}
            />
          </GroupBody>
          <GroupLabel>面幾何関係</GroupLabel>
        </Group>
        <Group $w={25}>
          <GroupBody $pad={5}>
            <Cluster $cols="20px">
              <Cell $h={16}>
                <Glyph name="grid" />
                <Drop />
              </Cell>
              <Cell $top={20}>
                <Glyph name="swirl" />
              </Cell>
            </Cluster>
          </GroupBody>
          <GroupLabel>パター...</GroupLabel>
        </Group>
        <Group $w={87}>
          <GroupBody $pad={3}>
            <Big w={25} icon="zoomArea" text={<>領域<br />の拡大</>} />
            <Big w={19} icon="fit" text="フィット" />
            <IconGrid
              cols="12px 12px 12px"
              left={2}
              items={["mag", "pan", "win2", "cam", "spin", "gem", "loop", "flag", ""]}
            />
          </GroupBody>
          <GroupLabel>向き</GroupLabel>
        </Group>
        <Group $w={54} $plain>
          <GroupBody $pad={2}>
            <Cluster $cols="17px 17px 16px" $row={17}>
              <ViewCell><Glyph name="cubeA" size={12} /></ViewCell>
              <ViewCell><Glyph name="cubeB" size={12} /></ViewCell>
              <ViewCell><Glyph name="cubeB" size={12} /></ViewCell>
              <ViewCell><Glyph name="cubeY" size={13} /></ViewCell>
              <ViewCell $on><Glyph name="cubeS" size={13} /></ViewCell>
            </Cluster>
          </GroupBody>
          <GroupLabel />
        </Group>
        <Group $w={78}>
          <GroupBody>
            <StyleColumn>
              <StyleHead>
                <Glyph name="styleIcon" size={9} />
                スタイル
              </StyleHead>
              <StyleSelect>
                Default
                <Caret $color="#444" />
              </StyleSelect>
            </StyleColumn>
          </GroupBody>
          <GroupLabel $pullLeft={48}>スタイル</GroupLabel>
        </Group>
        <Group $w={29} $plain>
          <GroupBody $pad={4}>
            <BigButton $w={19}>
              <Glyph name="layers" size={19} />
              <Tiny>
                <Caret $color="#777" />
              </Tiny>
            </BigButton>
          </GroupBody>
          <GroupLabel>ウィンド...</GroupLabel>
        </Group>
      </Ribbon>

      <Work>
        <Rail $w={15}>
          <RailSlot $top={4}>
            <Glyph name="railLib" />
          </RailSlot>
          {leftRail.map((r, i) => (
            <RailSlot key={i} $top={r.top}>
              <Glyph name={r.icon} />
            </RailSlot>
          ))}
          <VerticalText $top={2}>ヒキー</VerticalText>
          <RailSlot $top={41} />
          {lowerRail.map((r, i) => (
            <RailSlot key={i} $top={r.top}>
              <Glyph name={r.icon} />
            </RailSlot>
          ))}
        </Rail>

        <Center>
          <DocBar>
            <DocTab>
              <Glyph name="treePart" size={7} />
              July ×
            </DocTab>
            <DocControls>
              <span>◂</span>
              <span>▸</span>
              <span>▾</span>
              <span>✕</span>
            </DocControls>
          </DocBar>

          <Viewport>
            <Scene width="970" height="450" viewBox="15 90 970 450">
              <SceneDefs />
              <Model />
              <Callouts />
            </Scene>

            <TreeScroll />
            <Tree>
              {treeRows.map((r) => (
                <TreeRow key={r.label} $indent={r.indent}>
                  {r.exp && <Expander />}
                  {r.check !== undefined && (
                    <Check>
                      {r.check && (
                        <svg width="5" height="5" viewBox="0 0 6 6">
                          <path d="M1 3l1.5 2L5 1" fill="none" stroke="#222" strokeWidth="1.2" />
                        </svg>
                      )}
                    </Check>
                  )}
                  <Glyph name={r.icon} size={7} />
                  <TreeLabel $tone={r.tone}>{r.label}</TreeLabel>
                </TreeRow>
              ))}
              <TreeRow $indent={7}>
                <Expander />
                <SyncBar>
                  <Glyph name="treeSync" size={7} />
                  シンクロナス
                  <SyncTail />
                </SyncBar>
              </TreeRow>
              <TreeRow $indent={20}>
                <Expander />
                <TreeSpace $w={5} />
                <Glyph name="treeFeature" size={7} />
                <TreeLabel>フィーチャ</TreeLabel>
              </TreeRow>
              <TreeRow $indent={48}>
                <Glyph name="treeEye" size={6} />
                <TreeSpace $w={1} />
                <Glyph name="treePart" size={6} />
                <TreeLabel $tone="strong">パーツコピー_1</TreeLabel>
              </TreeRow>
            </Tree>

            <ToolStrip>
              <ToolButton $w={27} $tone="orange">
                <Glyph name="tool1" size={13} />
                <Caret $color="#222" />
              </ToolButton>
              <ToolButton $w={21}>
                <Glyph name="tool2" size={13} />
                <Caret $color="#222" />
              </ToolButton>
              <ToolButton $w={20}>
                <Glyph name="tool3" size={13} />
              </ToolButton>
              <ToolButton $w={20}>
                <Glyph name="tool4" size={13} />
              </ToolButton>
              <ToolButton $w={21}>
                <Glyph name="tool5" size={13} />
                <Caret $color="#222" />
              </ToolButton>
              <ToolButton $w={21} $tone="orange">
                <Glyph name="tool6" size={13} />
                <Caret $color="#222" />
              </ToolButton>
            </ToolStrip>

            <CommandPanel>
              <PanelHead>
                <PanelKey>?</PanelKey>
                <PanelKey>▸</PanelKey>
                <PanelKey $end>a</PanelKey>
              </PanelHead>
              <PanelList>
                {panelRows.map((r) => (
                  <PanelRow key={r.label} $indent={r.indent}>
                    {r.box && <PanelBox />}
                    {r.label}
                  </PanelRow>
                ))}
              </PanelList>
              <PanelFoot>
                詳細を非表示
                <PanelKey>︽</PanelKey>
              </PanelFoot>
            </CommandPanel>

            <Cube>
              <svg width="14" height="7" viewBox="0 0 14 7">
                <path d="M5 0v5" stroke="#3aa050" />
                <path d="M5 5h9" stroke="#e05050" />
              </svg>
              TOP
            </Cube>
          </Viewport>

          <PromptBar>
            <PromptTitle>
              <svg width="11" height="6" viewBox="0 0 11 6">
                <rect width="11" height="6" fill="#2f6fb8" />
                <rect x="1" y="2" width="9" height="2" fill="#cfe0f5" />
              </svg>
              プロンプトバー
            </PromptTitle>
            <PromptField>
              この軸に沿って選択内容を移動します。Shift+クリックで、操縦ハンドルのみを移動します。
              <PromptTools>
                <span>A</span>
                <span>A</span>
                <span>≈</span>
                <span>▾</span>
                <span>⬇</span>
                <span>✕</span>
              </PromptTools>
            </PromptField>
            <Copyright>Copyright(M)(C)2018 INTER MESH JAPAN CO.,LTD. All Rights Reserved</Copyright>
          </PromptBar>
        </Center>

        <Rail $w={15}>
          <RailSlot $top={3}>
            <Glyph name="help" size={12} />
          </RailSlot>
          <RailSlot $top={7}>
            <Glyph name="youtube" size={12} />
          </RailSlot>
          <RailSlot $top={4}>
            <Glyph name="facebook" size={12} />
          </RailSlot>
          <RailSlot $top={7}>
            <Glyph name="community" size={11} />
          </RailSlot>
          <VerticalText $top={2} $size={6} $track={-0.35}>
            Solid Edgeコミュニティ
          </VerticalText>
        </Rail>
      </Work>

      <StatusBar>
        <StatusText $w={566}>平面 (パーツコピー 1)</StatusText>
        <StatusText $w={139}>2個のアイテムが選択されました。</StatusText>
        <SearchBox>コマンドを検索</SearchBox>
        <StatusIcons>
          {statusIcons.map((s) => (
            <Glyph key={s} name={s} />
          ))}
          <Glyph name="zoomOut" size={10} />
          <ZoomSlider>
            <ZoomThumb />
          </ZoomSlider>
          <Glyph name="zoomIn" size={10} />
          <Glyph name="stop" size={11} />
          <Glyph name="go" size={11} />
        </StatusIcons>
      </StatusBar>
    </Page>
  );
}
